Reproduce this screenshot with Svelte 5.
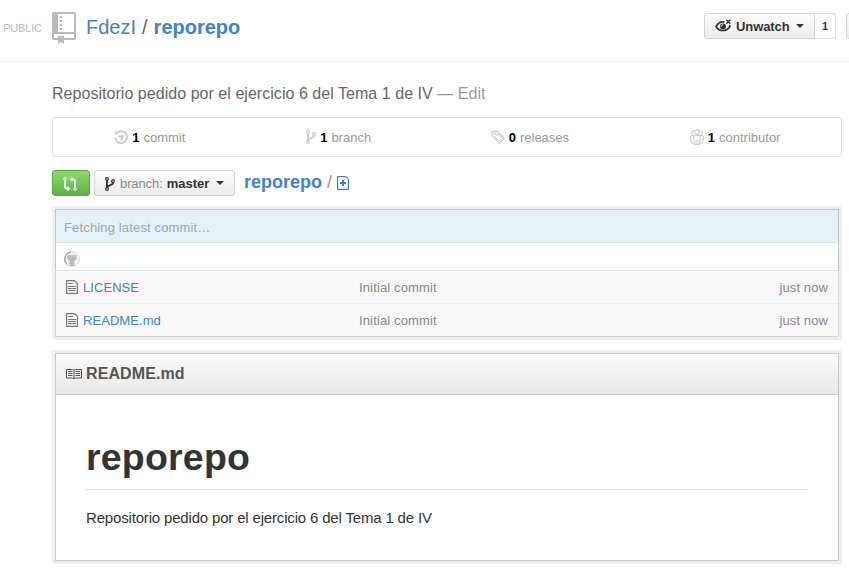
<script>
  const files = ['LICENSE', 'README.md'];
  const stats = [
    { icon: 'history', count: 1, label: 'commit', share: 194 },
    { icon: 'branch', count: 1, label: 'branch', share: 184 },
    { icon: 'tag', count: 0, label: 'releases', share: 199 },
    { icon: 'people', count: 1, label: 'contributor', share: 212 },
  ];
</script>

{#snippet branchIcon()}
  <svg width="10" height="14" viewBox="0 0 10 14" fill="none" stroke="currentColor">
    <circle cx="2" cy="2" r="1.4" stroke-width="1.2" />
    <circle cx="2" cy="12" r="1.4" stroke-width="1.2" />
    <circle cx="8" cy="4" r="1.4" stroke-width="1.2" />
    <path d="M2 3.5v7M8 5.5c0 3.500-5 1.800-6 5" stroke-width="1.9" />
  </svg>
{/snippet}

<div class="page">
  <header>
    <span class="public">PUBLIC</span>
    <svg class="repo" width="24" height="32" viewBox="0 0 24 32">
      <path fill="#bbb" fill-rule="evenodd" d="M1 0h22l1 1v26l-1 1H12v4l-3-2-3 2v-4H1l-1-1V1zM6 2v18h16V2zM2 22v4h4v-2h6v2h10v-4z" />
      <path fill="#bbb" d="M8 4h2v2H8zM8 8h2v2H8zM8 12h2v2H8zM8 16h2v2H8z" />
    </svg>
    <h1><span class="link">FdezI</span><span class="sep">/</span><strong>reporepo</strong></h1>
    <div class="actions">
      <div class="btn watch">
        <svg width="16" height="14" viewBox="0 0 16 14" fill="none" stroke="#333">
          <path d="M9.500 3C5.500 2.200 2.800 4.500 1 7.500c3 5.300 10.500 5.500 14 0l-.9-1.200" stroke-width="1.6" />
          <circle cx="8" cy="7.500" r="3" fill="#333" stroke="none" />
          <path d="M6.300 7.500c0-1.100.7-1.800 1.900-1.900" stroke="#fff" />
          <path d="m11.300.800 4 4m0-4-4 4" stroke-width="1.5" />
        </svg>
        <b>Unwatch</b><i class="caret"></i>
      </div>
      <div class="count">1</div>
      <div class="btn next"></div>
    </div>
  </header>

  <main>
    <p class="desc">Repositorio pedido por el ejercicio 6 del Tema 1 de IV <span class="edit">— Edit</span></p>

    <div class="stats">
      {#each stats as s}
        <div class="stat" style="flex-grow: {s.share}">
          {#if s.icon === 'history'}
            <svg width="14" height="14" viewBox="0 0 14 14" fill="none" stroke="currentColor">
              <path d="M3 2.800A5.900 5.900 0 1 1 1.100 7.500" stroke-width="2.100" />
              <path d="M.8.300v4.200H5z" fill="currentColor" stroke="none" />
              <path d="M4.500 6.300H10M7.500 6v5" stroke-width="2" />
            </svg>
          {:else if s.icon === 'branch'}
            {@render branchIcon()}
          {:else if s.icon === 'tag'}
            <svg width="14" height="14" viewBox="0 0 14 14" fill="none" stroke="currentColor">
              <path d="M1 1.500 5.500.800 13.300 8.200 8.200 13.300.7 5.500z" stroke-width="1.2" />
              <circle cx="3.500" cy="3.700" r="1.100" />
              <path d="m7 4 4 4-3 3-4-4z" stroke-width="1" />
            </svg>
          {:else}
            <svg width="14" height="16" viewBox="0 0 14 16" fill="none" stroke="currentColor">
              <circle cx="7" cy="3" r="2.300" stroke-width="1.200" />
              <path stroke-width="1.100" d="M4.600 2.200C2.800 1.300 1.300 2.500 1.800 4.200c.3.900 1 1.300 1.900 1.200M9.400 2.200c1.800-.9 3.300.3 2.800 2-.3.900-1 1.300-1.900 1.200M4.500 6.500h5l.8.800v4H9.200v4.200H4.800v-4.200H3.700v-4zM3.500 6.500h-2l-1 1V11h1v3h3M10.500 6.500h2l1 1V11h-1v3h-3M7 11v4" />
            </svg>
          {/if}
          <b>{s.count}</b><span>{s.label}</span>
        </div>
      {/each}
    </div>

    <div class="nav">
      <div class="btn compare">
        <svg width="14" height="14" viewBox="0 0 14 14" fill="none" stroke="#fff">
          <circle cx="2" cy="2" r="1.300" /><circle cx="12" cy="12" r="1.300" />
          <path d="M2 3.500V9.500q0 2.300 3 2.300M12 10.500V4.500q0-2.300-3-2.300" stroke-width="2" />
          <path d="M4.500 9v5.500L7.600 11.800zM9.500-.5V5L6.400 2.200z" fill="#fff" stroke="none" />
        </svg>
      </div>
      <div class="btn branch">
        {@render branchIcon()}
        <span>branch:</span><b>master</b><i class="caret"></i>
      </div>
      <div class="crumb">
        <strong>reporepo</strong><span>/</span>
        <svg width="12" height="14" viewBox="0 0 12 14" fill="none" stroke="#4183c4">
          <path d="M.6.600h8l2.800 2.800v10H.6z" stroke-width="1.2" />
          <path d="M3 7h6M6 4v6" stroke-width="2" />
        </svg>
      </div>
    </div>

    <div class="bubble files">
      <div class="inner">
        <div class="blue">
          <div class="fetch">Fetching latest commit…</div>
          <div class="loading">
            <svg width="16" height="16" viewBox="0 0 16 16">
              <circle cx="8" cy="8" r="7.400" fill="#f4f4f4" stroke="#ddd" />
              <path d="M3 13.400A7.400 7.400 0 0 1 7 .700" fill="none" stroke="#888" />
              <path fill="#bdbdbd" d="M4 3.300 6 4.200h4l2-.9.4 2c1.100 2.400 0 4.300-2.600 4.800l.7 1.500v3.500h-5V13L3.500 11.700l2.200.3.500-1.900C3.600 9.600 2.500 7.700 3.600 5.300z" />
            </svg>
          </div>
        </div>
        {#each files as name}
          <div class="row">
            <svg width="12" height="14" viewBox="0 0 12 14" fill="none" stroke="#777">
              <path d="M.6.600h7.900l2.900 2.900v9.900H.6z" stroke-width="1.200" />
              <path d="M2 3.500h5M2 6.500h8M2 8.500h8M2 10.500h8" />
            </svg>
            <span class="name">{name}</span>
            <span class="msg">Initial commit</span>
            <span class="age">just now</span>
          </div>
        {/each}
      </div>
    </div>

    <div class="bubble readme">
      <div class="inner">
        <div class="rhead">
          <svg width="16" height="12" viewBox="0 0 16 12" fill="none" stroke="#555">
            <path d="M.5 1.500h6L8 2.200l1.500-.7h6v8.500h-6l-1.500.8-1.500-.8h-6zM8 2v9" />
            <path d="M2 3.500h4.500M2 5.500h4.500M2 7.500h4.500M9.500 3.500H14M9.500 5.500H14M9.500 7.500H14" />
          </svg>
          <b>README.md</b>
        </div>
        <article>
          <h2>reporepo</h2>
          <p>Repositorio pedido por el ejercicio 6 del Tema 1 de IV</p>
        </article>
      </div>
    </div>
  </main>
</div>

<style>
  :global(body) { margin: 0; background: #fff; }
  .page { width: 849px; height: 583px; overflow: hidden; font: 13px/18px "Liberation Sans", Arial, sans-serif; color: #333; }
  .page * { box-sizing: border-box; }
  svg { display: block; flex: none; }
  h1, h2, p { margin: 0; }
  header { height: 62px; border-bottom: 1px solid #eee; display: flex; align-items: flex-start; padding-left: 3px; }
  .public { width: 49px; font-size: 11px; letter-spacing: -0.15px; line-height: 13px; color: #bbb; margin-top: 22px; }
  .repo { margin-top: 12px; }
  h1 { display: flex; font-size: 20px; line-height: 24px; font-weight: 400; margin: 15px 0 0 10px; }
  .link, h1 strong, .crumb strong, .name { color: #4183c4; }
  .sep { margin: 0 6px; color: #666; }
  .actions { display: flex; margin: 13px 0 0 auto; width: 145px; }
  .btn { height: 26px; flex: none; border: 1px solid #d4d4d4; border-radius: 3px; background: linear-gradient(#fcfcfc, #ececec); display: flex; align-items: center; }
  .btn b, .btn span, .stat b, .stat span, .row span { padding-top: 2px; }
  .watch { width: 111px; border-radius: 3px 0 0 3px; padding-left: 10px; }
  .watch b { margin-left: 5px; letter-spacing: -0.1px; }
  .caret { width: 0; height: 0; border: 4px solid transparent; border-top: 4px solid #333; border-bottom: 0; margin-left: 7px; }
  .count { width: 21px; height: 26px; flex: none; border: 1px solid #ddd; border-left: 0; border-radius: 0 3px 3px 0; font: bold 11px/24px "Liberation Sans", Arial, sans-serif; text-align: center; }
  .next { width: 30px; margin-left: 10px; }
  main { width: 790px; margin-left: 52px; }
  .desc { font-size: 16px; letter-spacing: 0.04px; line-height: 20px; color: #666; padding-top: 22px; height: 55px; white-space: nowrap; }
  .edit { color: #999; }
  .stats { height: 40px; border: 1px solid #ddd; border-radius: 3px; display: flex; }
  .stat { flex: 1 1 0; display: flex; align-items: center; justify-content: center; color: #999; }
  .stat svg { color: #ccc; }
  .stat b { color: #000; margin: 0 4px; }
  .nav { display: flex; align-items: center; margin-top: 13px; height: 26px; }
  .compare { width: 38px; border-color: #5ca941; background: linear-gradient(#8add6d, #60b044); padding-left: 10px; }
  .compare svg { margin-top: 2px; }
  .branch { width: 141px; margin-left: 4px; padding-left: 10px; }
  .branch svg { margin-top: 1px; }
  .branch span { color: #888; margin: 0 4px 0 5px; letter-spacing: -0.1px; }
  .branch .caret { margin-left: 7px; }
  .crumb { display: flex; align-items: center; font-size: 18px; line-height: 22px; margin: -2px 0 0 9px; }
  .crumb span { color: #999; margin: 0 5px; }
  .crumb svg { margin-top: 1px; }
  .bubble { background: #eee; border-radius: 3px; padding: 3px; }
  .inner { border: 1px solid #cacaca; background: #fff; }
  .files { margin-top: 10px; height: 134px; }
  .files .inner { border-color: #d4d4d4; height: 128px; }
  .blue { margin: -1px -1px 0; border: 1px solid #b7c7d1; border-bottom-color: #d8e6ec; height: 62px; }
  .fetch { height: 33px; background: #e6f1f6; border-bottom: 1px solid #d8e6ec; padding-left: 8px; line-height: 35px; letter-spacing: 0.15px; color: #9ea7ac; }
  .loading { padding: 8px; }
  .row { display: flex; align-items: center; height: 33px; background: #f8f8f8; border-bottom: 1px solid #eee; padding: 0 10px; color: #888; }
  .row:last-child { border: 0; height: 32px; }
  .name { width: 276px; margin-left: 5px; letter-spacing: 0.06px; }
  .msg { letter-spacing: 0.14px; }
  .age { margin-left: auto; letter-spacing: 0.1px; }
  .readme { margin-top: 10px; height: 214px; }
  .readme .inner { height: 208px; }
  .rhead { height: 41px; border-bottom: 1px solid #cacaca; background: linear-gradient(#fafafa, #e9e9e9); display: flex; align-items: center; padding-left: 10px; font-size: 16px; color: #555; }
  .rhead b { margin-left: 4px; letter-spacing: 0.1px; }
  article { padding: 30px; }
  h2 { font-size: 37.5px; letter-spacing: 0.2px; line-height: 64px; height: 65px; border-bottom: 1px solid #ddd; }
  article p { font-size: 15px; letter-spacing: -0.17px; line-height: 25px; margin-top: 15px; }
</style>
